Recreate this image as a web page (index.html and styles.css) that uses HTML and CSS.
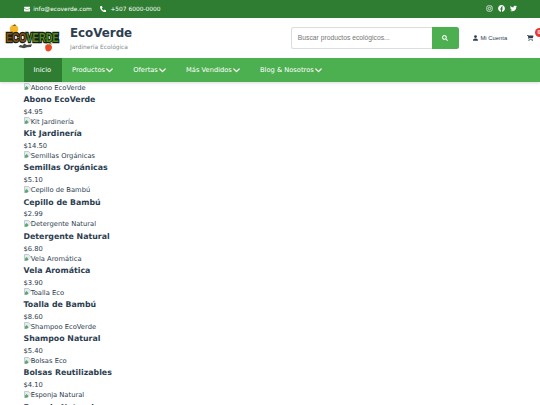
FILE: index.html
```html
<!DOCTYPE html>
<html lang="es">
<head>
<meta charset="UTF-8">
<title>EcoVerde</title>
<link rel="stylesheet" href="styles.css">
</head>
<body>
<svg class="sprite">
  <symbol id="chevron" viewBox="0 0 10 7"><path d="M1.2 1.3L5 5.1l3.8-3.8" fill="none" stroke="currentColor" stroke-width="1.7" stroke-linecap="round" stroke-linejoin="round"/></symbol>
  <symbol id="broken" viewBox="0 0 14 14">
    <path d="M1 13V1h8l4 4v8z" fill="#e3ebf6"/>
    <path d="M1 14V1h8l4 4v2" fill="none" stroke="#b4b9be" stroke-width="1.400"/>
    <path d="M2 13V9l3-3 4 4-3 3z" fill="#5da866"/>
    <path d="M14 7L7 14h7z" fill="#fff"/>
  </symbol>
</svg>

<div class="top-bar">
  <div class="contact">
    <svg class="icon-mail" viewBox="0 0 512 512"><path fill="currentColor" d="M48 64C21.500 64 0 85.500 0 112c0 15.100 7.100 29.300 19.200 38.400L236.800 313.600c11.400 8.500 27 8.500 38.400 0L492.800 150.400c12.100-9.100 19.200-23.300 19.200-38.400 0-26.500-21.500-48-48-48H48zM0 176v208c0 35.300 28.700 64 64 64h384c35.300 0 64-28.700 64-64V176L294.400 339.200c-22.800 17.100-54 17.100-76.800 0L0 176z"/></svg>
    <span class="mail">info@ecoverde.com</span>
    <svg class="icon-phone" viewBox="0 0 512 512"><path fill="currentColor" d="M164.900 24.600c-7.700-18.600-28-28.500-47.400-23.200l-88 24C12.100 30.200 0 46 0 64c0 247.400 200.600 448 448 448 18 0 33.800-12.100 38.600-29.500l24-88c5.300-19.400-4.600-39.700-23.200-47.400l-96-40c-16.300-6.800-35.200-2.100-46.300 11.600L304.700 368C234.300 334.700 177.300 277.700 144 207.300L193.300 167c13.700-11.200 18.400-30 11.600-46.300l-40-96z"/></svg>
    <span class="phone">+507 6000-0000</span>
  </div>
  <div class="social">
    <svg viewBox="0 0 16 16"><g fill="none" stroke="currentColor" stroke-width="1.6"><rect x="1.800" y="1.800" width="12.400" height="12.400" rx="3.500"/><circle cx="8" cy="8" r="2.900"/></g><circle cx="11.700" cy="4.300" r="1" fill="currentColor"/></svg>
    <svg viewBox="0 0 512 512"><path fill="currentColor" d="M504 256C504 119 393 8 256 8S8 119 8 256c0 123.800 90.700 226.400 209.300 245V327.700h-63V256h63v-54.600c0-62.200 37-96.500 93.700-96.500 27.100 0 55.500 4.800 55.500 4.800v61h-31.300c-30.800 0-40.400 19.100-40.400 38.700V256h68.800l-11 71.700h-57.800V501C413.300 482.400 504 379.800 504 256z"/></svg>
    <svg viewBox="0 0 512 512"><path fill="currentColor" d="M459.400 151.700c.3 4.500.3 9.100.3 13.600 0 138.700-105.600 298.600-298.600 298.600-59.500 0-114.700-17.200-161.100-47.100 8.400 1 16.600 1.300 25.300 1.300 49.100 0 94.200-16.600 130.300-44.800-46.100-1-84.800-31.200-98.100-72.800 6.500 1 13 1.600 19.800 1.600 9.400 0 18.800-1.300 27.600-3.600-48.100-9.700-84.100-52-84.100-103v-1.300c14 7.800 30.200 12.700 47.400 13.300-28.300-18.800-46.800-51-46.800-87.400 0-19.500 5.200-37.400 14.300-53 51.700 63.700 129.300 105.300 216.400 109.800-1.600-7.800-2.600-15.900-2.600-24 0-57.800 46.800-104.900 104.900-104.900 30.200 0 57.500 12.700 76.700 33.100 23.700-4.500 46.500-13.300 66.600-25.300-7.800 24.400-24.400 44.800-46.100 57.800 21.100-2.300 41.600-8.100 60.400-16.200-14.300 20.800-32.200 39.300-52.600 54.300z"/></svg>
  </div>
</div>

<header class="header">
  <svg class="logo" viewBox="0 0 56 28">
    <circle cx="9" cy="5" r="4.300" fill="#f4b62b"/>
    <path d="M7.500 2l2.500-2 1 2z" fill="#8a5a1c"/>
    <text class="logo-word" x="1" y="13.600" transform="scale(1 1.350)"><tspan class="logo-eco">ECO</tspan><tspan class="logo-verde">VERDE</tspan></text>
    <path d="M13.500 23l1.500-2 3 .5 1-2 3 1.500 5-.7-1 2.700-4 .2-3 1z" fill="#4a4a47"/>
    <path d="M40.500 21.500c2-2.500 6.500-1 6.500 1.500 0 2.800-2 4.500-4 4.500s-3.500-3-2.500-6z" fill="#ea4b26"/>
    <path d="M43.500 20.500l2-2.500 1.500 2.500z" fill="#5e9a2c"/>
  </svg>
  <div class="brand">
    <h1>EcoVerde</h1>
    <p>Jardinería Ecológica</p>
  </div>
  <div class="search">
    <div class="search-input">Buscar productos ecológicos...</div>
    <div class="search-btn">
      <svg viewBox="0 0 16 16"><path d="M6.500 1.500a5 5 0 1 1 0 10 5 5 0 0 1 0-10zM10.300 10.300L15 15" fill="none" stroke="currentColor" stroke-width="2.800"/></svg>
    </div>
  </div>
  <div class="account">
    <svg viewBox="0 0 448 512"><path fill="currentColor" d="M224 256a128 128 0 1 0 0-256 128 128 0 1 0 0 256zm-45.700 48C79.800 304 0 383.800 0 482.300 0 498.700 13.300 512 29.700 512h388.600c16.400 0 29.700-13.300 29.700-29.700C448 383.800 368.200 304 269.700 304h-91.400z"/></svg>
    <span>Mi Cuenta</span>
  </div>
  <div class="cart">
    <svg viewBox="0 0 576 512"><path fill="currentColor" d="M0 24C0 10.700 10.700 0 24 0h45.500c22 0 41.500 12.800 50.600 32h411c26.300 0 45.500 25 38.600 50.400l-41 152.300c-8.500 31.400-37 53.300-69.500 53.300H170.700l5.400 28.500c2.200 11.300 12.100 19.500 23.600 19.500H488c13.300 0 24 10.700 24 24s-10.700 24-24 24H199.700c-34.600 0-64.300-24.600-70.700-58.500L77.400 54.500C76.700 50.700 73.400 48 69.500 48H24C10.700 48 0 37.300 0 24zm128 440a48 48 0 1 1 96 0 48 48 0 1 1-96 0zm336-48a48 48 0 1 1 0 96 48 48 0 1 1 0-96z"/></svg>
    <span class="cart-count">0</span>
  </div>
</header>

<nav class="nav">
  <a class="active">Inicio</a>
  <a>Productos<svg><use href="#chevron"/></svg></a>
  <a>Ofertas<svg><use href="#chevron"/></svg></a>
  <a>Más Vendidos<svg><use href="#chevron"/></svg></a>
  <a>Blog &amp; Nosotros<svg><use href="#chevron"/></svg></a>
</nav>

<main class="products">
  <div class="product">
    <div class="photo"><svg><use href="#broken"/></svg>Abono EcoVerde</div>
    <h3>Abono EcoVerde</h3>
    <p>$4.95</p>
  </div>
  <div class="product">
    <div class="photo"><svg><use href="#broken"/></svg>Kit Jardinería</div>
    <h3>Kit Jardinería</h3>
    <p>$14.50</p>
  </div>
  <div class="product">
    <div class="photo"><svg><use href="#broken"/></svg>Semillas Orgánicas</div>
    <h3>Semillas Orgánicas</h3>
    <p>$5.10</p>
  </div>
  <div class="product">
    <div class="photo"><svg><use href="#broken"/></svg>Cepillo de Bambú</div>
    <h3>Cepillo de Bambú</h3>
    <p>$2.99</p>
  </div>
  <div class="product">
    <div class="photo"><svg><use href="#broken"/></svg>Detergente Natural</div>
    <h3>Detergente Natural</h3>
    <p>$6.80</p>
  </div>
  <div class="product">
    <div class="photo"><svg><use href="#broken"/></svg>Vela Aromática</div>
    <h3>Vela Aromática</h3>
    <p>$3.90</p>
  </div>
  <div class="product">
    <div class="photo"><svg><use href="#broken"/></svg>Toalla Eco</div>
    <h3>Toalla de Bambú</h3>
    <p>$8.60</p>
  </div>
  <div class="product">
    <div class="photo"><svg><use href="#broken"/></svg>Shampoo EcoVerde</div>
    <h3>Shampoo Natural</h3>
    <p>$5.40</p>
  </div>
  <div class="product">
    <div class="photo"><svg><use href="#broken"/></svg>Bolsas Eco</div>
    <h3>Bolsas Reutilizables</h3>
    <p>$4.10</p>
  </div>
  <div class="product">
    <div class="photo"><svg><use href="#broken"/></svg>Esponja Natural</div>
    <h3>Esponja Natural</h3>
  </div>
</main>
</body>
</html>
```
FILE: styles.css
```css
* {
  margin: 0;
  padding: 0;
  box-sizing: border-box;
}

body {
  height: 405px;
  overflow: hidden;
  font-family: "DejaVu Sans", Verdana, sans-serif;
  font-size: 6.75px;
  color: #2c3e50;
  background: #fff;
}

svg {
  display: block;
  flex: none;
}

.sprite {
  display: none;
}

/* Top bar */
.top-bar {
  display: flex;
  justify-content: space-between;
  align-items: center;
  height: 17.5px;
  padding: 0 23.5px;
  background: #2e7d32;
  color: #fff;
  font-size: 5.9px;
}
.contact {
  display: flex;
  align-items: center;
}
.icon-mail,
.icon-phone {
  width: 6.2px;
  height: 6.2px;
}
.mail {
  width: 67px;
  margin-left: 3.5px;
  white-space: nowrap;
}
.phone {
  margin-left: 4px;
}
.social {
  display: flex;
  gap: 5px;
}
.social svg {
  width: 7px;
  height: 7px;
}

/* Header */
.header {
  display: flex;
  align-items: center;
  height: 40.5px;
  padding-left: 4.5px;
  overflow: hidden;
}
.logo {
  width: 56px;
  height: 28px;
}
.logo-word {
  font-family: "Liberation Sans", Arial, sans-serif;
  font-weight: bold;
  font-size: 9.4px;
  stroke: #17200d;
  stroke-width: 1.8px;
  paint-order: stroke;
}
.logo-eco {
  fill: #84501f;
}
.logo-verde {
  fill: #4f8a24;
}
.brand {
  width: 220.500px;
  margin-left: 9.5px;
  padding-top: 3px;
}
.brand h1 {
  font-size: 11.85px;
  line-height: 15px;
}
.brand p {
  margin-top: 2px;
  font-size: 5.9px;
  line-height: 9px;
  color: #7f8c8d;
}
.search {
  display: flex;
  flex: none;
  width: 168px;
  height: 22px;
}
.search-input {
  width: 141.500px;
  padding-left: 6.3px;
  border: 1px solid #ddd;
  border-right: 0;
  border-radius: 2.5px 0 0 2.5px;
  font-family: "Liberation Sans", Arial, sans-serif;
  font-size: 6.75px;
  line-height: 20px;
  color: #757575;
}
.search-btn {
  display: flex;
  flex: 1;
  align-items: center;
  justify-content: center;
  border-radius: 0 2.5px 2.5px 0;
  background: #4caf50;
  color: #fff;
}
.search-btn svg {
  width: 6px;
  height: 6px;
}
.account {
  display: flex;
  flex: none;
  align-items: center;
  width: 54.500px;
  margin-left: 14px;
  font-family: "Liberation Sans", Arial, sans-serif;
  font-size: 5.85px;
}
.account svg {
  width: 5px;
  height: 6px;
  margin-right: 3px;
}
.cart {
  position: relative;
  flex: none;
}
.cart svg {
  width: 6.5px;
  height: 6px;
}
.cart-count {
  position: absolute;
  top: -6.5px;
  left: 7.5px;
  width: 9px;
  height: 9px;
  border-radius: 50%;
  background: #e53935;
  color: #fff;
  font-family: "Liberation Sans", Arial, sans-serif;
  font-size: 5.5px;
  font-weight: bold;
  line-height: 9px;
  text-align: center;
}

/* Navigation */
.nav {
  display: flex;
  height: 24px;
  padding-left: 23.5px;
  background: #4caf50;
  box-shadow: 0 1px 3px rgba(0, 0, 0, .15);
}
.nav a {
  display: flex;
  align-items: center;
  padding: 0 10px;
  color: #fff;
  font-size: 6.7px;
}
.nav .active {
  padding-right: 10.8px;
  background: #2e7d32;
}
.nav svg {
  width: 7px;
  height: 5px;
  margin-left: 1.2px;
}

/* Products */
.products {
  padding: .6px 23.5px 0;
}
.product {
  height: 34.2px;
}
.photo {
  display: flex;
  height: 11.4px;
  line-height: 11px;
}
.photo svg {
  width: 7.2px;
  height: 7.2px;
  margin-top: .5px;
}
.product h3 {
  font-size: 7.85px;
  line-height: 12.8px;
}
.product p {
  line-height: 11px;
}
```
